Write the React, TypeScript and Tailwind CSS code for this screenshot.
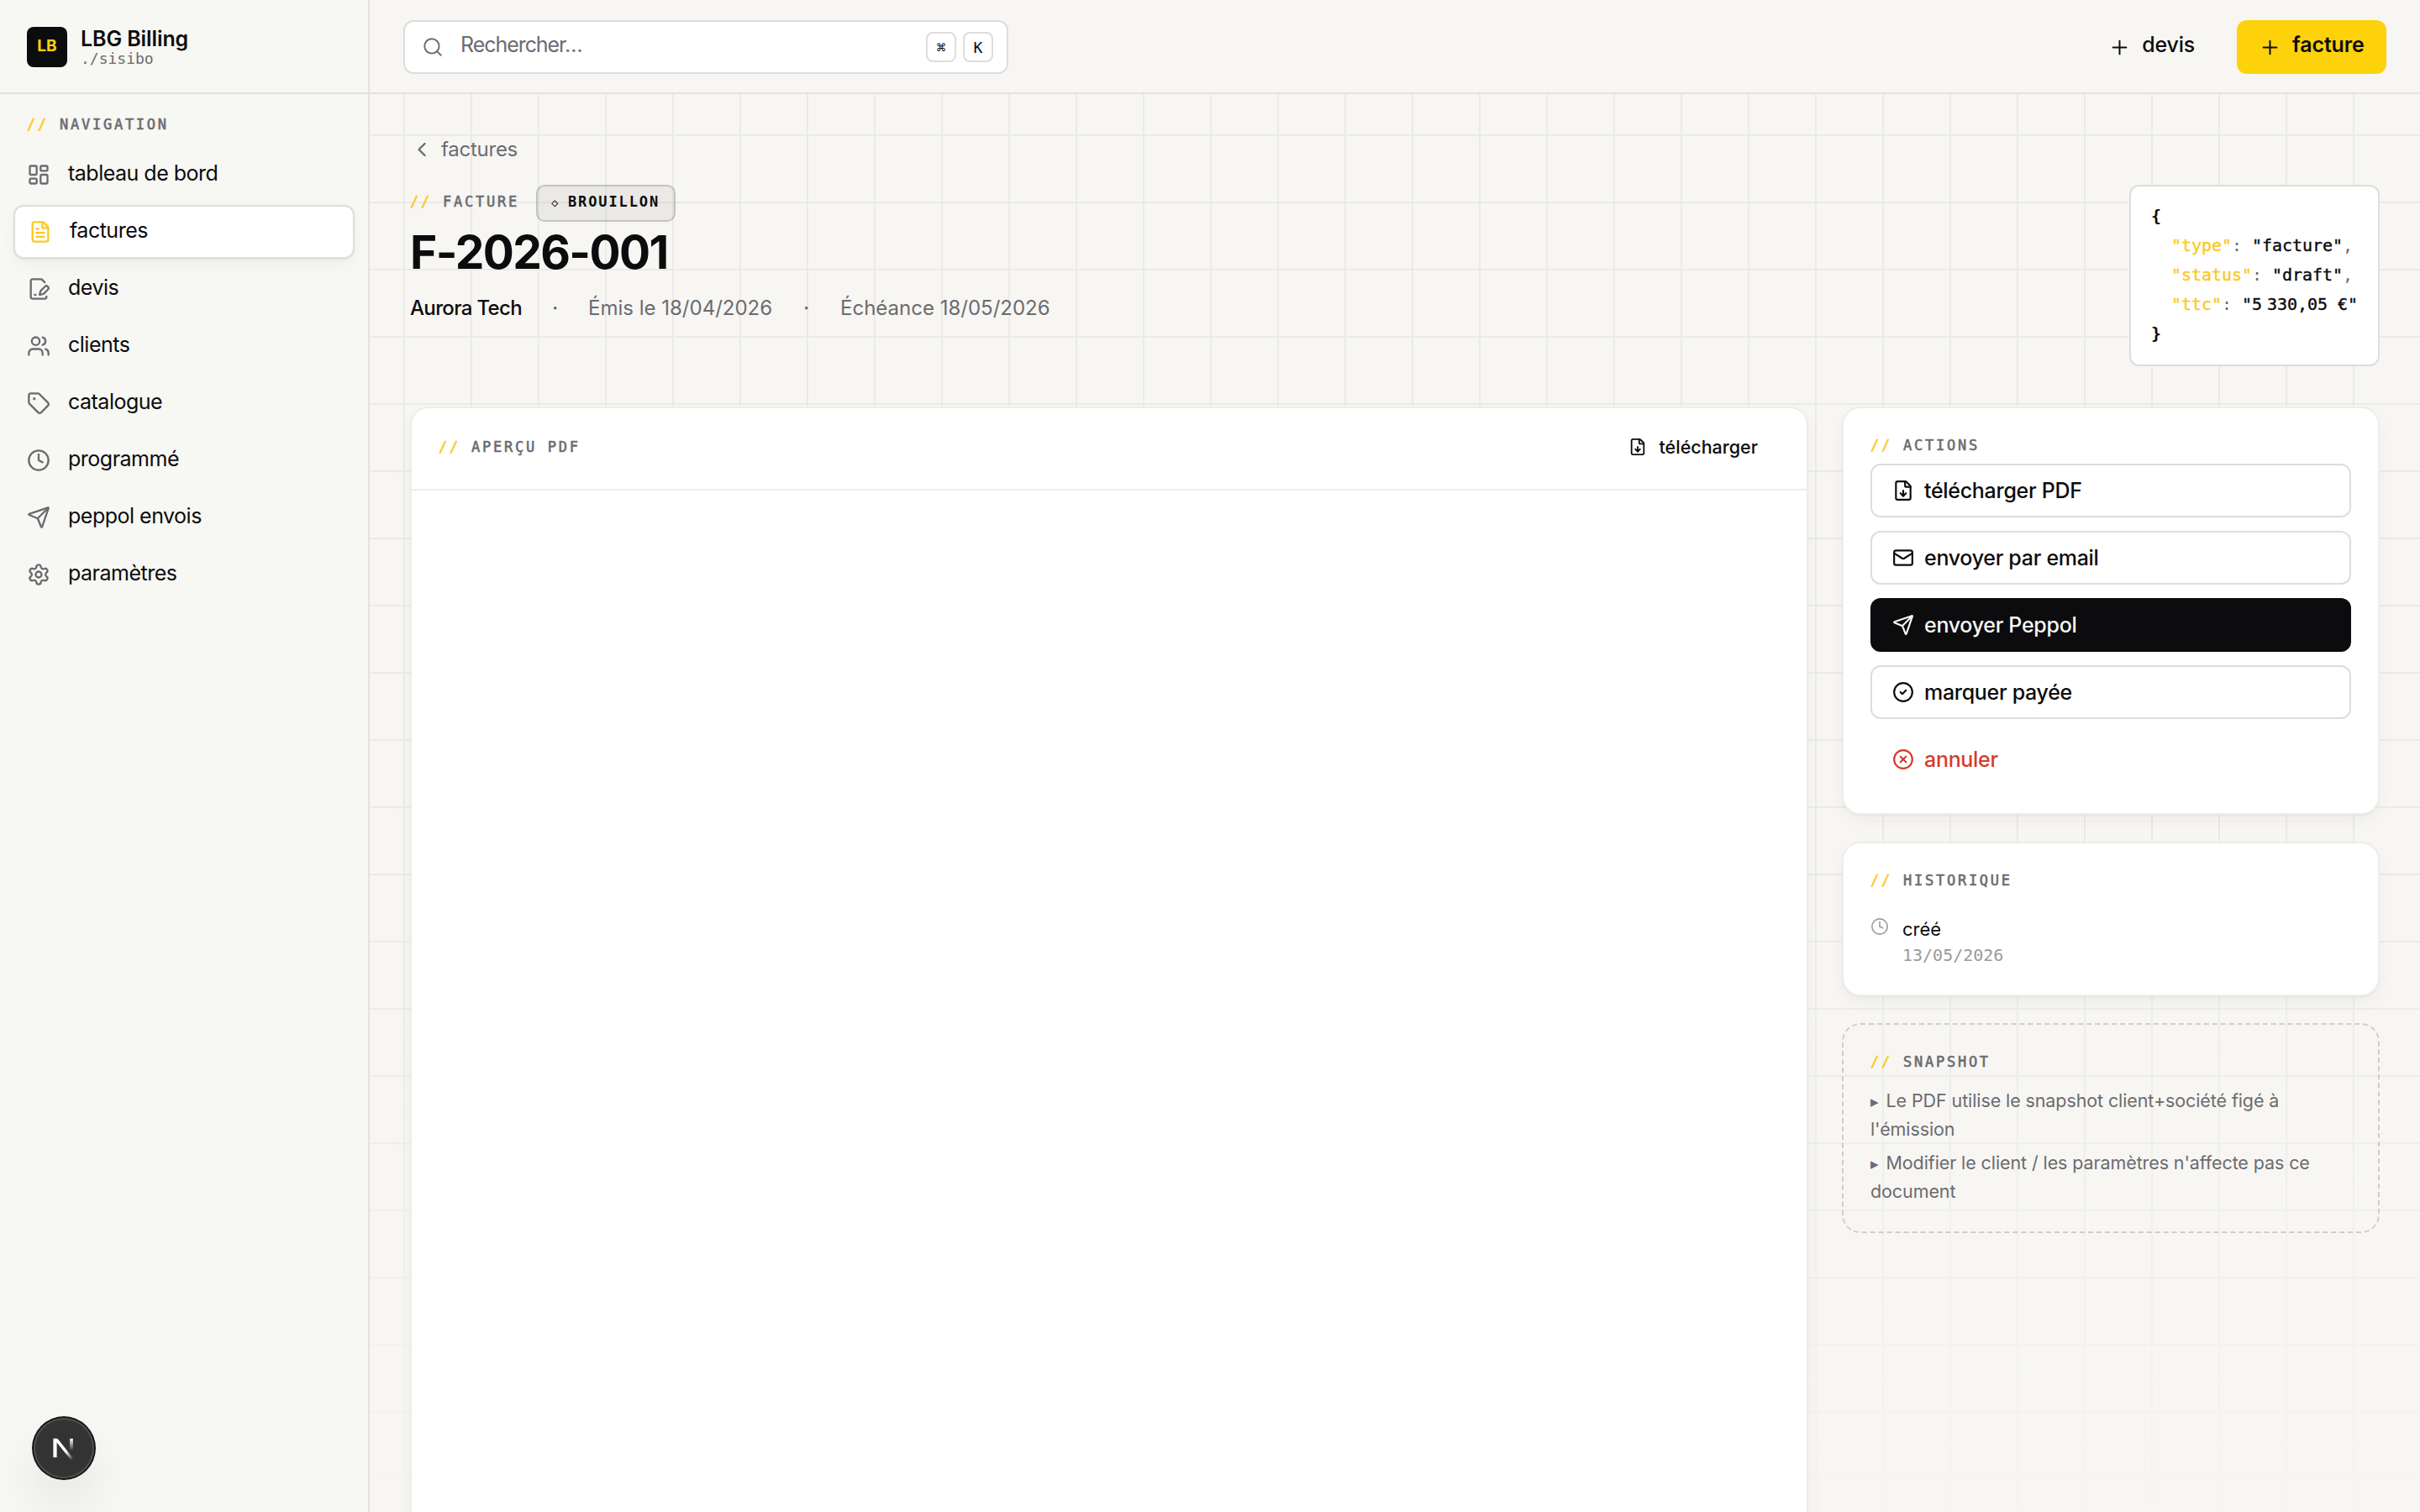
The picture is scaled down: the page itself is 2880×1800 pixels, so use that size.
import React from 'react'
import {
    ChevronLeft,
    CircleCheck,
    CircleX,
    Clock,
    FileDown,
    FilePenLine,
    FileText,
    LayoutDashboard,
    Mail,
    Plus,
    Search,
    Send,
    Settings,
    Tag,
    Users,
    type LucideIcon,
} from 'lucide-react'
import clsx from 'clsx'

type NavItem = { label: string; icon: LucideIcon; active?: boolean }

const navItems: NavItem[] = [
    {label: 'tableau de bord', icon: LayoutDashboard},
    {label: 'factures', icon: FileText, active: true},
    {label: 'devis', icon: FilePenLine},
    {label: 'clients', icon: Users},
    {label: 'catalogue', icon: Tag},
    {label: 'programmé', icon: Clock},
    {label: 'peppol envois', icon: Send},
    {label: 'paramètres', icon: Settings},
]

type Action = { label: string; icon: LucideIcon; variant: 'outline' | 'dark' | 'danger' }

const actions: Action[] = [
    {label: 'télécharger PDF', icon: FileDown, variant: 'outline'},
    {label: 'envoyer par email', icon: Mail, variant: 'outline'},
    {label: 'envoyer Peppol', icon: Send, variant: 'dark'},
    {label: 'marquer payée', icon: CircleCheck, variant: 'outline'},
    {label: 'annuler', icon: CircleX, variant: 'danger'},
]

const mono = "font-['DejaVu_Sans_Mono',monospace]"

const SectionLabel: React.FC<{ children: React.ReactNode; className?: string }> = ({children, className}) => (
    <div className={clsx(mono, 'flex h-6 items-center text-[17px] leading-6 tracking-[2.75px] whitespace-pre text-[#6b6b70] [-webkit-text-stroke:0.6px_currentColor]', className)}>
        <span className="text-[#fdc91c]">{'// '}</span>
        {children}
    </div>
)

const Sidebar: React.FC = () => (
    <aside className="flex w-[440px] shrink-0 flex-col border-r-2 border-[#e3e2df] bg-[#f7f7f3]">
        <div className="flex h-28 items-center gap-4 border-b-2 border-[#e3e2df] pt-0.5 pl-8">
            <div className="flex size-12 items-center justify-center rounded-lg bg-[#0c0c0e] pb-0.5 text-[19px] font-bold text-[#fed20b]">
                LB
            </div>
            <div className="flex flex-col">
                <span className="text-[25px] leading-7 font-semibold tracking-[-0.1px]">LBG Billing</span>
                <span className={clsx(mono, 'text-[18px] leading-5 text-[#6b6b70]')}>./sisibo</span>
            </div>
        </div>
        <SectionLabel className="mt-6 pl-8">NAVIGATION</SectionLabel>
        <nav className="mt-4 flex flex-col gap-1 px-4">
            {navItems.map(({label, icon: Icon, active}) => (
                <a
                    key={label}
                    className={clsx(
                        'flex h-16 items-center gap-[21px] rounded-xl px-4',
                        active && 'border-2 border-[#dddddd] bg-white shadow-[0_2px_2px_rgba(0,0,0,0.04),0_8px_24px_-4px_rgba(0,0,0,0.05)]',
                    )}
                >
                    <Icon size={28} strokeWidth={2} className={active ? 'text-[#fdc91c]' : 'text-[#6b6b70]'}/>
                    <span className="pb-[5px] text-[25px] leading-8 tracking-[-0.5px]">{label}</span>
                </a>
            ))}
        </nav>
    </aside>
)

const Kbd: React.FC<{ children: React.ReactNode }> = ({children}) => (
    <kbd className={clsx(mono, 'flex size-9 items-center justify-center rounded-lg border-2 border-[#dddddd] bg-white text-[18px]')}>
        {children}
    </kbd>
)

const Topbar: React.FC = () => (
    <header className="flex h-28 shrink-0 items-center justify-between border-b-2 border-[#e3e2df] bg-[#f7f6f3] px-10 pt-0.5">
        <div className="flex h-16 w-[720px] items-center rounded-xl border-2 border-[#dddddd] bg-white pr-4 pl-5">
            <Search size={26} strokeWidth={1.75} className="text-[#6b6b70]"/>
            <span className="ml-5 flex-1 pb-1 text-[25px] tracking-[-1.05px] text-[#6b6b70]">Rechercher…</span>
            <div className="flex gap-2">
                <Kbd>⌘</Kbd>
                <Kbd>K</Kbd>
            </div>
        </div>
        <div className="flex items-center gap-6">
            <button className="flex h-16 items-center gap-[13px] px-[26px] font-medium">
                <Plus size={27} strokeWidth={1.75}/>
                <span className="pb-1 text-[25px] tracking-[-0.2px]">devis</span>
            </button>
            <button className="flex h-16 w-[178px] items-center gap-[13px] rounded-xl bg-[#fed20b] pl-[26px] font-semibold">
                <Plus size={27} strokeWidth={1.75}/>
                <span className="pb-1 text-[25px] tracking-[-0.1px]">facture</span>
            </button>
        </div>
    </header>
)

const JsonLine: React.FC<{ name: string; last?: boolean; children: React.ReactNode }> = ({name, last, children}) => (
    <div className="pl-6">
        <span className="text-[#fdc91c] [-webkit-text-stroke:0.4px_currentColor]">"{name}"</span>
        <span className="text-[#6b6b70]">: </span>
        <span className="[-webkit-text-stroke:0.4px_currentColor]">"{children}"</span>
        {!last && <span className="text-[#6b6b70]">,</span>}
    </div>
)

const InvoiceHead: React.FC = () => (
    <div className="flex h-[332px] justify-between">
        <div className="flex flex-col">
            <a className="mt-2.5 flex h-8 items-center gap-[9px] text-[#6b6b70]">
                <ChevronLeft size={28} strokeWidth={2}/>
                <span className="text-[24px] leading-7 tracking-[-0.25px]">factures</span>
            </a>
            <div className="mt-[26px] flex h-11 items-center gap-5">
                <SectionLabel className="pb-1">FACTURE</SectionLabel>
                <span
                    className={clsx(mono, 'flex h-11 w-[166px] items-center rounded-[10px] border-2 border-black/17 bg-black/5 pb-0.5 pl-4 text-[17px] font-bold tracking-[1.9px] whitespace-pre')}
                >
                    <span className="w-5 text-[14px] font-normal">◇</span>BROUILLON
                </span>
            </div>
            <h1 className="mt-1.5 text-[55px] leading-[60px] font-bold tracking-[-1.6px]">F-2026-001</h1>
            <div className="mt-[19px] flex items-center text-[24px] leading-9 text-[#6b6b70]">
                <span className="w-[169px] font-medium tracking-[-0.65px] text-[#0c0c0e]">Aurora Tech</span>
                <span className="w-[43px] font-medium">·</span>
                <span className="w-[256px]">Émis le 18/04/2026</span>
                <span className="w-11 font-medium">·</span>
                <span>Échéance 18/05/2026</span>
            </div>
        </div>
        <div
            className={clsx(mono, 'mt-[68px] flex h-[216px] w-[298px] flex-col justify-center rounded-xl border-2 border-[#dddddd] bg-white px-6 pb-0.5 text-[20px] leading-[35px] tracking-[-0.04px] whitespace-pre')}
        >
            <div className="font-bold">{'{'}</div>
            <JsonLine name="type">facture</JsonLine>
            <JsonLine name="status">draft</JsonLine>
            <JsonLine name="ttc" last>5<span className="inline-block w-1.5"/>330,05 €</JsonLine>
            <div className="font-bold">{'}'}</div>
        </div>
    </div>
)

const card = 'rounded-[22px] border-2 border-[#ededeb] bg-white shadow-[0_2px_2px_rgba(0,0,0,0.03),0_8px_24px_-4px_rgba(0,0,0,0.05)]'

const PdfPreview: React.FC = () => (
    <section className={clsx(card, 'h-[1500px] w-[1664px]')}>
        <div className="flex h-[98px] items-center justify-between border-b-2 border-[#ededeb] pr-[58px] pl-8">
            <SectionLabel className="pb-1">APERÇU PDF</SectionLabel>
            <button className="flex items-center gap-3.5 pb-1 font-medium">
                <FileDown size={22} strokeWidth={2}/>
                <span className="text-[21.5px] leading-7">télécharger</span>
            </button>
        </div>
    </section>
)

const SidePanels: React.FC = () => (
    <div className="flex w-[640px] flex-col gap-8">
        <section className={clsx(card, 'h-[486px] px-8 pt-8')}>
            <SectionLabel>ACTIONS</SectionLabel>
            <div className="mt-2.5 flex flex-col gap-4">
                {actions.map(({label, icon: Icon, variant}) => (
                    <button
                        key={label}
                        className={clsx(
                            'flex h-16 items-center gap-3 rounded-xl border-2 pl-6 font-medium',
                            variant === 'outline' && 'border-[#dddddd] bg-white',
                            variant === 'dark' && 'border-[#0c0c0e] bg-[#0c0c0e] text-[#f7f6f3]',
                            variant === 'danger' && 'border-transparent text-[#d63a2f]',
                        )}
                    >
                        <Icon size={26} strokeWidth={2}/>
                        <span className="text-[25px] leading-9 tracking-[-0.3px]">{label}</span>
                    </button>
                ))}
            </div>
        </section>
        <section className={clsx(card, 'h-[184px] px-8 pt-8')}>
            <SectionLabel>HISTORIQUE</SectionLabel>
            <div className="mt-[22px] flex gap-4">
                <Clock size={22} strokeWidth={1.75} className="mt-2.5 text-[#9a9a9c]"/>
                <div className="flex flex-col">
                    <span className="mt-2 text-[22px] leading-8">créé</span>
                    <span className={clsx(mono, 'mt-px text-[20px] leading-7 text-[#9a9a9c]')}>13/05/2026</span>
                </div>
            </div>
        </section>
        <section className="h-[250px] rounded-[22px] border-2 border-dashed border-[#cfcecb] px-8 pt-8">
            <SectionLabel>SNAPSHOT</SectionLabel>
            <div className="mt-[17px] flex flex-col gap-1.5 text-[21.5px] leading-[34px] tracking-[-0.1px] text-[#6b6b70]">
                <p><span className="inline-block w-[18.5px] text-[19px] leading-none">▸</span>Le PDF utilise le snapshot client+société figé à<br/>l'émission</p>
                <p><span className="inline-block w-[18.5px] text-[19px] leading-none">▸</span>Modifier le client / les paramètres n'affecte pas ce<br/>document</p>
            </div>
        </section>
    </div>
)

const DevBadge: React.FC = () => (
    <div className="absolute top-[1688px] left-10 flex size-[72px] items-center justify-center rounded-full bg-[#333333] shadow-[0_0_0_2px_#171717,inset_0_0_0_2px_rgba(255,255,255,0.14),0_32px_64px_-16px_rgba(0,0,0,0.24)]">
        <svg width="28" height="28" viewBox="0 0 28 28" fill="none">
            <defs>
                <linearGradient id="diag" x1="16" y1="18" x2="24" y2="28" gradientUnits="userSpaceOnUse">
                    <stop stopColor="#fff"/>
                    <stop offset="1" stopColor="#fff" stopOpacity="0"/>
                </linearGradient>
                <linearGradient id="stem" x1="23" y1="3" x2="23" y2="17" gradientUnits="userSpaceOnUse">
                    <stop stopColor="#fff"/>
                    <stop offset="1" stopColor="#fff" stopOpacity="0"/>
                </linearGradient>
            </defs>
            <path d="M3.5 25V2.7" stroke="#fff" strokeWidth="4.2"/>
            <path d="M1.4 2.7H6.6L26 27.3L23.5 29.5L3 4Z" fill="url(#diag)"/>
            <path d="M23 2.7V17" stroke="url(#stem)" strokeWidth="3.8"/>
        </svg>
    </div>
)

const App: React.FC = () => {
    return (
        <div className="relative flex h-[1800px] w-[2880px] overflow-hidden bg-[#f7f6f3] font-[Inter,sans-serif] text-[#0c0c0e]">
            {/* page grid, fades out towards the bottom */}
            <div
                className="absolute inset-0 bg-[linear-gradient(to_right,#eaeae7_2px,transparent_2px),linear-gradient(to_bottom,#eaeae7_2px,transparent_2px)] bg-size-[80px_80px] mask-[linear-gradient(to_bottom,black_60%,transparent_105%)]"/>
            <div className="relative flex flex-1">
                <Sidebar/>
                <div className="flex flex-1 flex-col">
                    <Topbar/>
                    <main className="flex flex-col px-12 pt-10">
                        <InvoiceHead/>
                        <div className="flex gap-10">
                            <PdfPreview/>
                            <SidePanels/>
                        </div>
                    </main>
                </div>
            </div>
            <DevBadge/>
        </div>
    )
}

export default App
